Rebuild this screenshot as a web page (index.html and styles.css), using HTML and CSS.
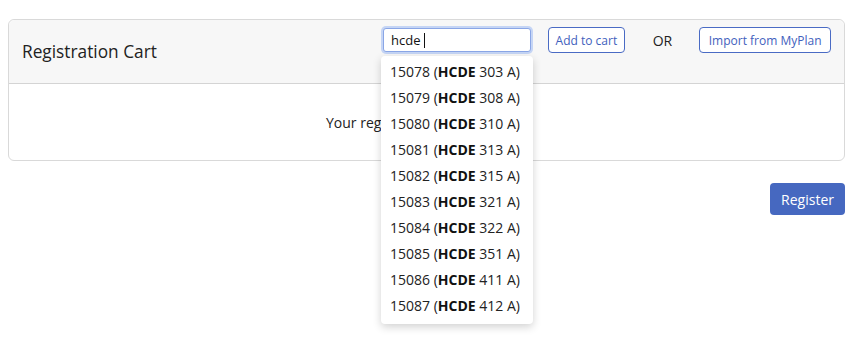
FILE: index.html
```html
<!DOCTYPE html>
<html lang="en">
<head>
  <meta charset="UTF-8">
  <title>Registration Cart</title>
  <link rel="stylesheet" href="styles.css">
</head>
<body>
  <div class="cart">
    <div class="cart-head">
      <h2 class="cart-title">Registration Cart</h2>
      <div class="cart-tools">
        <div class="search">
          <div class="search-input">hcde<span class="caret"></span></div>
          <ul class="suggest">
            <li>15078 (<b>HCDE</b> 303 A)</li>
            <li>15079 (<b>HCDE</b> 308 A)</li>
            <li>15080 (<b>HCDE</b> 310 A)</li>
            <li>15081 (<b>HCDE</b> 313 A)</li>
            <li>15082 (<b>HCDE</b> 315 A)</li>
            <li>15083 (<b>HCDE</b> 321 A)</li>
            <li>15084 (<b>HCDE</b> 322 A)</li>
            <li>15085 (<b>HCDE</b> 351 A)</li>
            <li>15086 (<b>HCDE</b> 411 A)</li>
            <li>15087 (<b>HCDE</b> 412 A)</li>
          </ul>
        </div>
        <button class="btn-outline">Add to cart</button>
        <span class="or">OR</span>
        <button class="btn-outline btn-wide">Import from MyPlan</button>
      </div>
    </div>
    <div class="cart-body">Your registration cart is empty.</div>
  </div>
  <div class="actions">
    <button class="btn-primary">Register</button>
  </div>
</body>
</html>
```

FILE: styles.css
```css
html, body { min-height: 343px; }
body { margin: 0; padding: 19px 10px 0 8px; box-sizing: border-box; font-family: "Open Sans", "Liberation Sans", sans-serif; color: #222; background: #fff; }
.cart { border: 1px solid #d9d9d9; border-radius: 6px; }
.cart-head { display: flex; align-items: center; justify-content: space-between; height: 63px; padding: 0 13px; background: #f7f7f7; border-bottom: 1px solid #d4d4d4; border-radius: 6px 6px 0 0; }
.cart-title { margin: 0; font-size: 17.3px; font-weight: normal; }
.cart-tools { display: flex; align-items: center; align-self: flex-start; margin-top: 7px; }
.search { position: relative; margin-right: 17px; }
.search-input { box-sizing: border-box; width: 148px; height: 24px; border: 1px solid #8aa6e6; border-radius: 3px; background: #fff; box-shadow: 0 0 0 2px #c5d5f5; padding: 0 7px; font-size: 13px; line-height: 22px; color: #111; }
.caret { display: inline-block; width: 1px; height: 15px; background: #111; margin-left: 3px; vertical-align: -3px; }
.suggest { position: absolute; left: -2px; top: 28px; width: 152px; margin: 0; padding: 3px 0 5px; list-style: none; background: #fff; border-radius: 4px; box-shadow: 0 3px 8px rgba(0,0,0,0.18); z-index: 5; }
.suggest li { height: 26px; line-height: 26px; padding-left: 9px; font-size: 14px; color: #222; }
.suggest b { font-weight: 700; color: #111; }
.btn-outline { height: 26px; padding: 0 6.5px; border: 1px solid #4a6bc4; border-radius: 4px; background: #fff; color: #3f61bd; font-family: inherit; font-size: 12px; }
.btn-wide { padding: 0 8.5px; }
.or { margin: 0 27px 0 28px; font-size: 14px; color: #222; }
.cart-body { height: 76px; display: flex; align-items: center; justify-content: center; font-size: 14px; color: #222; }
.actions { display: flex; justify-content: flex-end; padding-top: 22px; }
.btn-primary { height: 32px; padding: 0 11px; border: none; border-radius: 4px; background: #4668c0; color: #fff; font-family: inherit; font-size: 14px; }
```
